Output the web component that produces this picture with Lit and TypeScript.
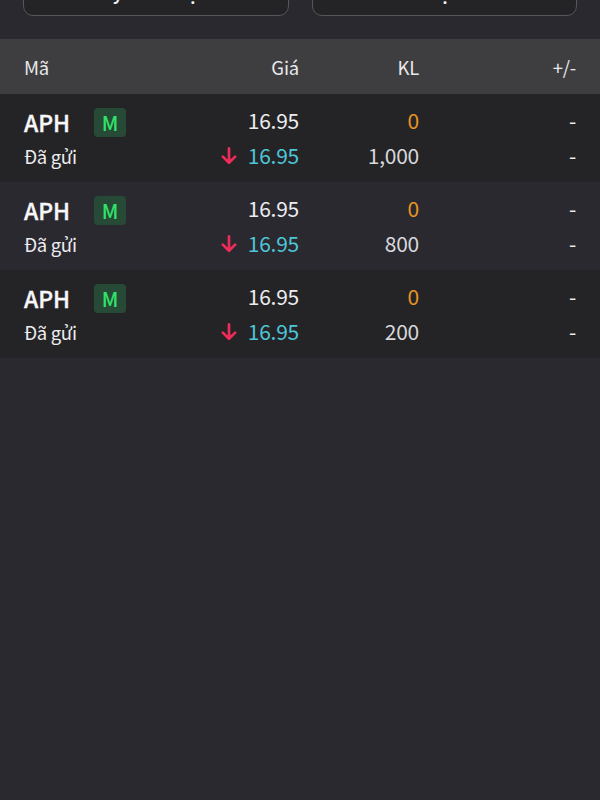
import { LitElement, html, css } from "lit";
import { customElement, property } from "lit/decorators.js";

interface Order {
  code: string;
  side: string;
  status: string;
  matchedPrice: string;
  price: string;
  matched: string;
  volume: string;
}

const base = { code: "APH", side: "M", status: "Đã gửi", matchedPrice: "16.95", price: "16.95", matched: "0" };
const orders: Order[] = ["1,000", "800", "200"].map((volume) => ({ ...base, volume }));

@customElement("order-row")
export class OrderRow extends LitElement {
  @property({ attribute: false }) order!: Order;

  static styles = css`
    :host {
      display: grid;
      grid-template-columns: 149px 126px 120px 157px;
      grid-template-rows: 35px 35px;
      padding: 9px 24px;
      height: 88px;
      box-sizing: border-box;
      font-size: 21px;
      letter-spacing: -0.25px;
      line-height: 35px;
      color: #ececef;
    }
    .num { text-align: right; }
    .name { display: flex; align-items: center; height: 38px; }
    .code {
      width: 70px;
      font-size: 23px;
      font-weight: 500;
      letter-spacing: -0.1px;
      color: #f7f7f9;
      -webkit-text-stroke: 0.35px #f7f7f9;
    }
    .badge {
      width: 32px;
      height: 29px;
      border-radius: 4px;
      margin-top: 1px;
      background: #264a35;
      color: #32e26b;
      font-size: 20px;
      font-weight: 500;
      line-height: 29px;
      letter-spacing: 0;
      text-align: center;
    }
    .status { font-size: 18.5px; line-height: 37px; letter-spacing: -0.35px; }
    .price { display: flex; justify-content: flex-end; align-items: center; color: #4ec5d8; }
    .arrow { width: 16px; height: 18px; margin-right: 11px; }
    .arrow path { fill: none; stroke: #ee2b59; stroke-width: 2.7; stroke-linecap: round; stroke-linejoin: round; }
    .matched { color: #e89423; }
    .volume { color: #d8d8dc; }
  `;

  render() {
    const o = this.order;
    return html`
      <div class="name"><span class="code">${o.code}</span><span class="badge">${o.side}</span></div>
      <div class="num">${o.matchedPrice}</div>
      <div class="num matched">${o.matched}</div>
      <div class="num">-</div>
      <div class="status">${o.status}</div>
      <div class="price">
        <svg class="arrow" viewBox="0 0 16 18"><path d="M8 1.4V15.6M1.8 9.6L8 15.8L14.2 9.6" /></svg>
        <span>${o.price}</span>
      </div>
      <div class="num volume">${o.volume}</div>
      <div class="num">-</div>
    `;
  }
}

@customElement("app-root")
export class AppRoot extends LitElement {
  static styles = css`
    :host {
      display: block;
      width: 600px;
      height: 800px;
      overflow: hidden;
      background: #2a292f;
      font-family: "Noto Sans CJK SC", "Noto Sans", sans-serif;
    }
    .actions {
      display: flex;
      gap: 23px;
      height: 39px;
      padding: 0 23px 23px;
      box-sizing: border-box;
      align-items: flex-end;
      overflow: hidden;
    }
    .action {
      flex: 1;
      height: 52px;
      padding-right: 3px;
      box-sizing: border-box;
      border: 1px solid #55555b;
      border-radius: 10px;
      background: #242427;
      color: #f0f0f2;
      font-size: 19.5px;
      font-weight: 500;
      line-height: 51px;
      word-spacing: -2px;
      text-align: center;
    }
    .header {
      display: grid;
      grid-template-columns: 149px 126px 120px 157px;
      height: 55px;
      padding: 0 24px;
      background: #3e3e40;
      color: #e8e8ea;
      font-size: 18.5px;
      letter-spacing: -0.2px;
      line-height: 57px;
    }
    .num { text-align: right; }
    order-row { background: #242426; }
    order-row:nth-child(even) { background: #2a292f; }
  `;

  render() {
    return html`
      <div class="actions">
        <div class="action">Hủy nhiều lệnh</div>
        <div class="action">Đã chọn hết</div>
      </div>
      <div class="header">
        <span>Mã</span><span class="num">Giá</span><span class="num">KL</span><span class="num">+/-</span>
      </div>
      <div class="rows">${orders.map((o) => html`<order-row .order=${o}></order-row>`)}</div>
    `;
  }
}
